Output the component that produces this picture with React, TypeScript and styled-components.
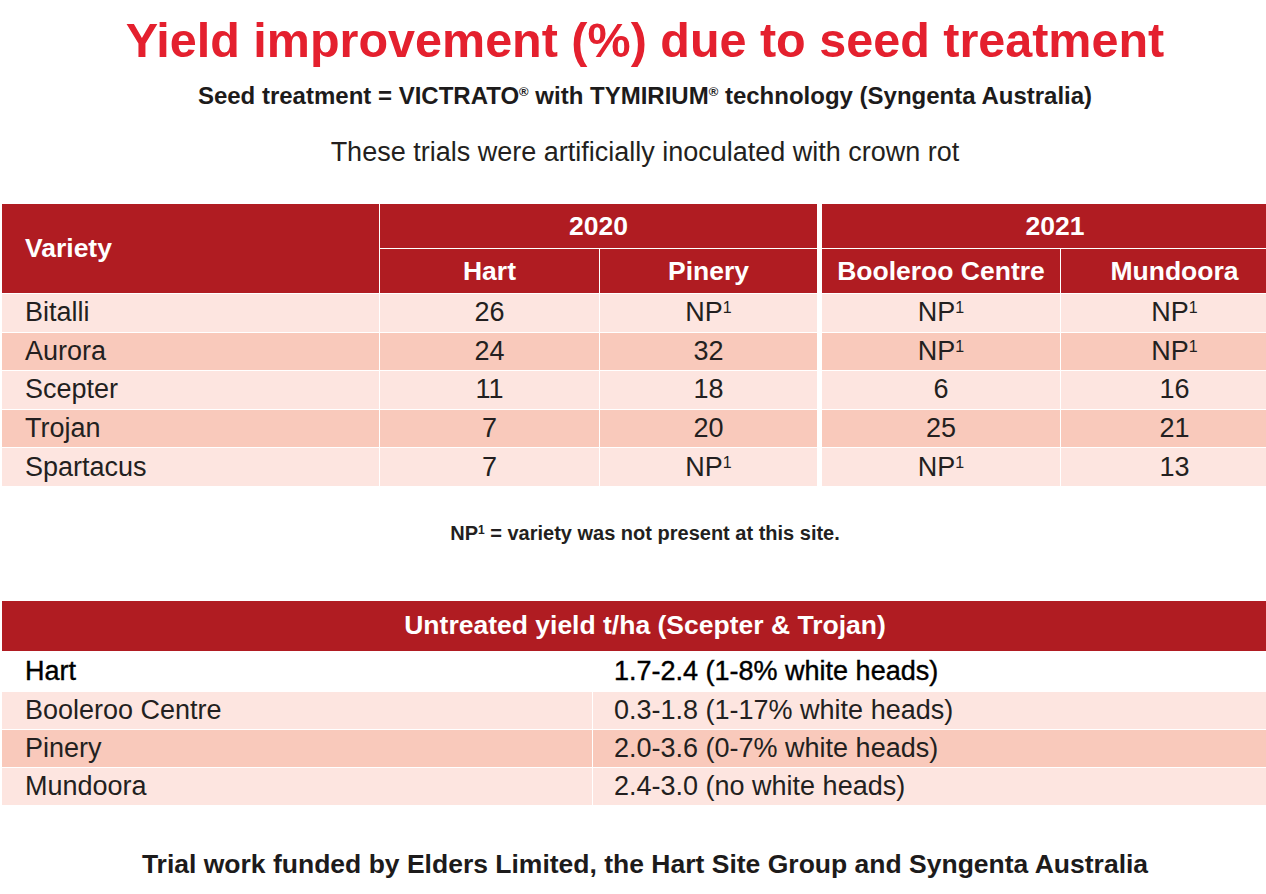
import styled, { createGlobalStyle } from 'styled-components';

const GlobalStyle = createGlobalStyle`
  html, body {
    margin: 0;
    padding: 0;
    background: #fff;
    overflow: hidden;
  }
  body {
    font-family: "Liberation Sans", Arial, sans-serif;
    color: #231f20;
  }
`;

const RED = '#b01c22';
const LIGHT = '#fde5e0';
const DARK = '#f9c9bb';

type Tone = 'light' | 'dark' | 'white';

const toneColor = (t: Tone) => (t === 'dark' ? DARK : t === 'white' ? '#fff' : LIGHT);

const trials = [
  { name: 'Bitalli', values: ['26', 'NP', 'NP', 'NP'] },
  { name: 'Aurora', values: ['24', '32', 'NP', 'NP'] },
  { name: 'Scepter', values: ['11', '18', '6', '16'] },
  { name: 'Trojan', values: ['7', '20', '25', '21'] },
  { name: 'Spartacus', values: ['7', 'NP', 'NP', '13'] },
];

const yields = [
  { site: 'Hart', range: '1.7-2.4 (1-8% white heads)', tone: 'white' as Tone, strong: true },
  { site: 'Booleroo Centre', range: '0.3-1.8 (1-17% white heads)', tone: 'light' as Tone },
  { site: 'Pinery', range: '2.0-3.6 (0-7% white heads)', tone: 'dark' as Tone },
  { site: 'Mundoora', range: '2.4-3.0 (no white heads)', tone: 'light' as Tone },
];

// NP values get the footnote marker
const Value = ({ v }: { v: string }) =>
  v === 'NP' ? (
    <span>
      NP<Sup>1</Sup>
    </span>
  ) : (
    <span>{v}</span>
  );

const App = () => {
  return (
    <Page>
      <GlobalStyle />
      <Title>Yield improvement (%) due to seed treatment</Title>
      <Subtitle>
        Seed treatment = VICTRATO<Reg>®</Reg> with TYMIRIUM<Reg>®</Reg> technology (Syngenta
        Australia)
      </Subtitle>
      <Lead>These trials were artificially inoculated with crown rot</Lead>

      <TrialGrid>
        <HeadCell $rows={2} $left>
          Variety
        </HeadCell>
        <HeadCell $span={2}>2020</HeadCell>
        <HeadCell $span={2} $split>
          2021
        </HeadCell>
        <HeadCell>Hart</HeadCell>
        <HeadCell>Pinery</HeadCell>
        <HeadCell $split>Booleroo Centre</HeadCell>
        <HeadCell>Mundoora</HeadCell>
        {trials.map((row, i) => {
          const tone: Tone = i % 2 === 1 ? 'dark' : 'light';
          return [
            <Cell key={row.name} $tone={tone} $left>
              {row.name}
            </Cell>,
            ...row.values.map((v, j) => (
              <Cell key={row.name + j} $tone={tone} $split={j === 2}>
                <Value v={v} />
              </Cell>
            )),
          ];
        })}
      </TrialGrid>

      <Note>
        NP<NoteSup>1</NoteSup> = variety was not present at this site.
      </Note>

      <YieldGrid>
        <YieldHead>Untreated yield t/ha (Scepter &amp; Trojan)</YieldHead>
        {yields.map((row) => [
          <YieldCell key={row.site} $tone={row.tone} $strong={row.strong} $first>
            {row.site}
          </YieldCell>,
          <YieldCell key={row.site + '-r'} $tone={row.tone} $strong={row.strong}>
            {row.range}
          </YieldCell>,
        ])}
      </YieldGrid>

      <Footer>Trial work funded by Elders Limited, the Hart Site Group and Syngenta Australia</Footer>
    </Page>
  );
};

export default App;

// region STYLES

const Page = styled.div`
  width: 1290px;
  display: flex;
  flex-direction: column;
  align-items: stretch;
  padding: 0 2px;
  box-sizing: border-box;
`;

const Title = styled.h1`
  margin: 12px 0 0;
  font-size: 48.5px;
  line-height: 56px;
  font-weight: bold;
  color: #e4202e;
  text-align: center;
`;

const Subtitle = styled.p`
  margin: 10px 0 0;
  font-size: 24px;
  line-height: 28px;
  font-weight: bold;
  text-align: center;
  color: #1d1b1b;
`;

const Reg = styled.span`
  font-size: 13px;
  vertical-align: 8px;
`;

const Lead = styled.p`
  margin: 27px 0 0;
  font-size: 27px;
  line-height: 30px;
  text-align: center;
`;

const TrialGrid = styled.div`
  margin-top: 37px;
  display: grid;
  grid-template-columns: 377px 219px 217px 242px 227px;
  grid-template-rows: 44px 44px repeat(5, 37.6px);
  gap: 1px;
  background: #fff;
  font-size: 27px;
`;

const HeadCell = styled.div<{ $span?: number; $rows?: number; $left?: boolean; $split?: boolean }>`
  grid-column: span ${(p) => p.$span ?? 1};
  grid-row: span ${(p) => p.$rows ?? 1};
  margin-left: ${(p) => (p.$split ? '4px' : '0')};
  background: ${RED};
  color: #fff;
  font-size: 26.5px;
  font-weight: bold;
  display: flex;
  align-items: center;
  justify-content: ${(p) => (p.$left ? 'flex-start' : 'center')};
  padding-left: ${(p) => (p.$left ? '23px' : '0')};
`;

const Cell = styled.div<{ $tone: Tone; $left?: boolean; $split?: boolean }>`
  margin-left: ${(p) => (p.$split ? '4px' : '0')};
  background: ${(p) => toneColor(p.$tone)};
  display: flex;
  align-items: center;
  justify-content: ${(p) => (p.$left ? 'flex-start' : 'center')};
  padding-left: ${(p) => (p.$left ? '23px' : '0')};
  color: #231f20;
`;

const Sup = styled.span`
  font-size: 16px;
  vertical-align: 8px;
`;

const Note = styled.p`
  margin: 33px 0 0;
  font-size: 20px;
  line-height: 22px;
  font-weight: bold;
  text-align: center;
  color: #231f20;
`;

const NoteSup = styled.span`
  font-size: 12px;
  vertical-align: 6px;
`;

const YieldGrid = styled.div`
  margin-top: 57px;
  display: grid;
  grid-template-columns: 590px 1fr;
  grid-template-rows: 50px 39px 37px 37px 37px;
  gap: 1px;
  background: #fff;
  font-size: 27px;
`;

const YieldHead = styled.div`
  grid-column: span 2;
  background: ${RED};
  color: #fff;
  font-size: 26.5px;
  font-weight: bold;
  display: flex;
  align-items: center;
  justify-content: center;
`;

const YieldCell = styled.div<{ $tone: Tone; $strong?: boolean; $first?: boolean }>`
  background: ${(p) => toneColor(p.$tone)};
  display: flex;
  align-items: center;
  padding-left: ${(p) => (p.$first ? '23px' : '21px')};
  color: ${(p) => (p.$strong ? '#000' : '#231f20')};
  -webkit-text-stroke: ${(p) => (p.$strong ? '0.4px #000' : '0')};
`;

const Footer = styled.p`
  margin: 44px 0 0;
  font-size: 26.5px;
  line-height: 30px;
  font-weight: bold;
  text-align: center;
  color: #1d1b1b;
`;

// endregion
